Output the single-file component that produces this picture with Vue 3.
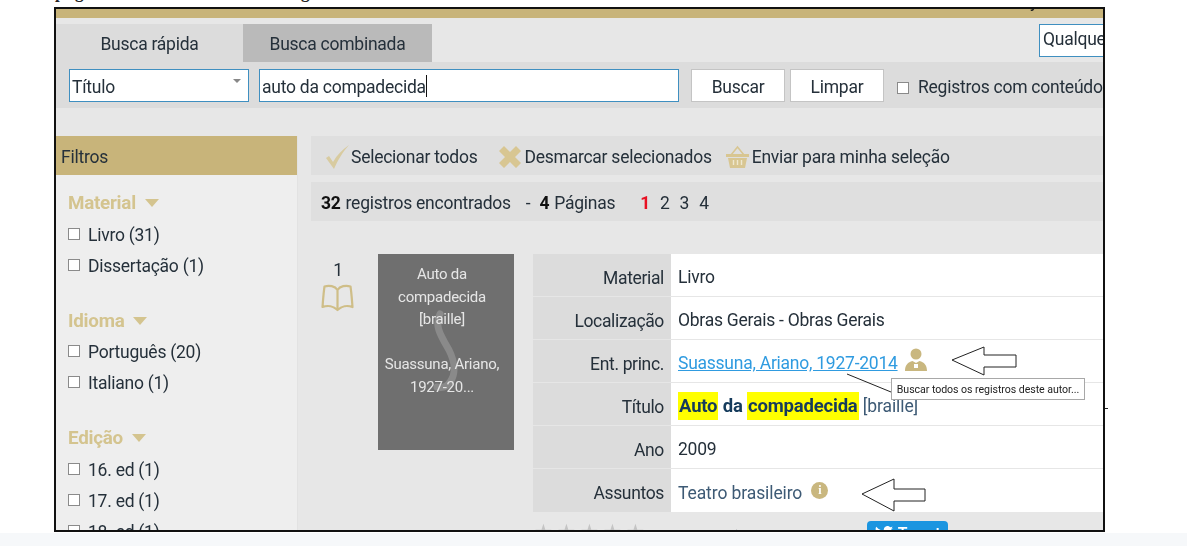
<script setup>
const groups = [
  { title: 'Material', items: ['Livro (31)', 'Dissertação (1)'] },
  { title: 'Idioma', items: ['Português (20)', 'Italiano (1)'] },
  { title: 'Edição', items: ['16. ed (1)', '17. ed (1)', '18. ed (1)'] }
]
const rows = [
  { label: 'Material', value: 'Livro' },
  { label: 'Localização', value: 'Obras Gerais - Obras Gerais' },
  { label: 'Ent. princ.', kind: 'author' },
  { label: 'Título', kind: 'title' },
  { label: 'Ano', value: '2009' },
  { label: 'Assuntos', kind: 'subject' }
]
</script>

<template>
  <div class="stage">
    <div class="clipped-line"><span>página</span><span class="second">registro</span></div>
    <div class="shot">
      <div class="goldbar"><span class="gold-y">y</span></div>
      <div class="tabs">
        <div class="tab active">Busca rápida</div>
        <div class="tab">Busca combinada</div>
        <div class="spacer"></div>
        <div class="any">Qualquer</div>
      </div>
      <div class="searchbar">
        <div class="field select"><span class="nudge">Título</span><span class="sel-caret"></span></div>
        <div class="field query"><span class="nudge">auto da compadecida</span><span class="cursor"></span></div>
        <div class="btn first"><span class="nudge">Buscar</span></div>
        <div class="btn"><span class="nudge">Limpar</span></div>
        <span class="box top"></span>
        <span class="nowrap nudge">Registros com conteúdo digital</span>
      </div>
      <div class="body">
        <aside class="filters">
          <div class="filters-head"><span class="nudge">Filtros</span></div>
          <div class="groups">
            <div v-for="g in groups" :key="g.title" class="group">
              <div class="group-title">{{ g.title }}<span class="caret"></span></div>
              <div v-for="i in g.items" :key="i" class="check"><span class="box"></span><span class="nudge-s">{{ i }}</span></div>
            </div>
          </div>
        </aside>
        <main class="results">
          <div class="strip actions">
            <span class="act a-check">
              <svg width="24" height="26" viewBox="0 0 24 26"><path d="M1 14l3-2 4 6C12 11 17 6 24 1 17 9 13 16 9 25z" fill="#d8cba0"/></svg>
              Selecionar todos
            </span>
            <span class="act a-x">
              <svg width="24" height="24" viewBox="0 0 24 24"><path d="M1 6l5-5 6 6 6-6 5 5-6 6 6 6-5 5-6-6-6 6-5-5 6-6z" fill="#d8c692"/></svg>
              Desmarcar selecionados
            </span>
            <span class="act a-basket">
              <svg width="23" height="26" viewBox="0 0 23 26"><path d="M5 11l6.500-8 6.500 8" fill="none" stroke="#d8c692" stroke-width="1.600"/><path d="M0 10h23v3H0zM2 14h19l-2 10H4z" fill="#d8c692"/><path d="M7.500 16v5M11.500 16v5M15.500 16v5" stroke="#efe8cf" stroke-width="1.400"/></svg>
              Enviar para minha seleção
            </span>
          </div>
          <div class="strip count">
            <b>32</b><span class="c1">registros encontrados</span><span class="c2">-</span><b class="c3">4</b><span class="c4">Páginas</span>
            <span class="pages"><b class="current">1</b><span>2</span><span>3</span><span>4</span></span>
          </div>
          <div class="record">
            <div class="index">
              <div class="num">1</div>
              <svg class="book" width="33" height="28" viewBox="0 0 33 28"><path d="M16.500 6C14 2 8 1 3.500 2.500 2.500 9 2 17 1.500 23c5-2 11-1 15 3 4-4 10-5 15-3-.5-6-1-14-2-20.500C25 1 19 2 16.500 6zM16.500 6v19" fill="none" stroke="#cfbe88" stroke-width="2.200" stroke-linejoin="round"/></svg>
            </div>
            <div class="cover">
              <svg class="cover-mark" width="30" height="90" viewBox="0 0 30 90"><path d="M9 4C3 16 10 26 18 40c6 12 7 24 1 32-3 5-8 6-13 5" fill="none" stroke="#8a8a8a" stroke-width="7" stroke-linecap="round"/></svg>
              <div class="cover-text">
                <p>Auto da<br>compadecida<br>[braille]</p>
                <p>Suassuna, Ariano,<br>1927-20...</p>
              </div>
            </div>
            <div class="table">
              <div v-for="r in rows" :key="r.label" class="row">
                <div class="label">{{ r.label }}</div>
                <div class="value">
                  <template v-if="r.kind === 'author'">
                    <a class="link">Suassuna, Ariano, 1927-2014</a>
                    <svg class="person" width="22" height="23" viewBox="0 0 22 23"><circle cx="11" cy="6" r="5.500" fill="#c9b77f"/><path d="M0 23c0-6 3-9 7.500-10l3.500 2 3.500-2C19 14 22 17 22 23z" fill="#c9b77f"/><path d="M9 16h4v4H9z" fill="#fff"/></svg>
                  </template>
                  <template v-else-if="r.kind === 'title'">
                    <strong><mark>Auto</mark> da <mark>compadecida</mark></strong><span class="soft">&nbsp;[braille]</span>
                  </template>
                  <template v-else-if="r.kind === 'subject'">
                    <span class="soft">Teatro brasileiro</span>
                    <span class="info">i</span>
                  </template>
                  <template v-else>{{ r.value }}</template>
                </div>
              </div>
            </div>
          </div>
          <div class="social">
            <span class="stars">★★★★★</span>
            <span class="rate">Avaliação dos usuários</span>
            <span class="tweet">
              <svg width="18" height="15" viewBox="0 0 24 20"><path d="M24 2.400c-.9.400-1.800.700-2.800.800 1-.6 1.800-1.600 2.200-2.700-1 .6-2 1-3.100 1.200A4.900 4.900 0 0 0 11.900 6.200 14 14 0 0 1 1.700 1a4.900 4.900 0 0 0 1.500 6.600c-.8 0-1.600-.2-2.200-.6 0 2.400 1.700 4.400 3.900 4.900-.7.200-1.500.2-2.200.1.600 2 2.400 3.400 4.600 3.400A9.900 9.900 0 0 1 0 17.400 14 14 0 0 0 21.500 5c1-.7 1.800-1.600 2.500-2.600z" fill="#fff"/></svg>
              Tweet
            </span>
          </div>
        </main>
      </div>
      <svg class="arrow a1" width="68" height="30" viewBox="0 0 68 30"><path d="M1 14L33 1v8h32v12H33v8z" fill="#fff" stroke="#222" stroke-width="1"/></svg>
      <svg class="arrow a2" width="68" height="34" viewBox="0 0 68 34"><path d="M1 16L33 1v10h31v12H33v10z" fill="#fff" stroke="#222" stroke-width="1"/></svg>
      <svg class="arrow leader" width="50" height="20" viewBox="0 0 50 20"><path d="M0 1L44 19" stroke="#222" stroke-width="1"/></svg>
      <div class="tooltip">Buscar todos os registros deste autor...</div>
    </div>
    <span class="tick"></span>
    <div class="footer"></div>
  </div>
</template>

<style>
html, body { margin: 0; background: #fff; overflow: hidden; }
</style>

<style scoped>
.stage {
  width: 1187px; height: 546px; position: relative; overflow: hidden;
  font-family: Roboto, "Open Sans", sans-serif; font-size: 17.5px; color: #25303a;
  letter-spacing: -0.25px; background: #fff;
}
.clipped-line { position: absolute; left: 55px; top: -17px; font: 700 17px "Liberation Serif", serif; letter-spacing: 1px; color: #222; white-space: nowrap; }
.second { margin-left: 174px; }
.nudge { position: relative; top: 1.5px; }
.nudge-s { position: relative; top: 1px; }
.shot {
  position: absolute; left: 54px; top: 7px; width: 1051px; height: 525px; box-sizing: border-box;
  border: 2px solid #111; background: #e7e7e7; overflow: hidden; filter: blur(0.35px);
}
.goldbar { height: 9px; background: #c8b47a; position: relative; overflow: hidden; }
.gold-y { position: absolute; left: 974px; top: -20px; line-height: 24px; color: #222; }
.tabs { display: flex; align-items: flex-end; height: 38px; margin-top: 6px; }
.tab { width: 187px; flex: none; height: 38px; padding-top: 2px; box-sizing: border-box; display: flex; align-items: center; justify-content: center; background: #dcdcdc; color: #25303a; }
.tab + .tab { width: 189px; background: #bababa; }
.spacer { flex: 1; }
.any {
  align-self: flex-start; width: 64px; height: 33px; box-sizing: border-box; border: 1px solid #3f8fc0; border-right: 0;
  background: #fff; padding: 4px 0 0 3px; overflow: hidden; white-space: nowrap;
}
.searchbar { height: 46px; background: #dcdcdc; display: flex; align-items: center; padding-left: 13px; white-space: nowrap; overflow: hidden; }
.field { flex: none; height: 33px; box-sizing: border-box; border: 1px solid #3f8fc0; background: #fff; display: flex; align-items: center; padding-left: 2px; }
.select { width: 180px; position: relative; }
.sel-caret { position: absolute; right: 7px; top: 9px; border: 4px solid transparent; border-top: 4px solid #888; }
.query { width: 420px; margin-left: 10px; }
.cursor { width: 1px; height: 22px; background: #111; position: relative; top: 1px; }
.btn {
  flex: none; width: 94px; height: 33px; box-sizing: border-box; border: 1px solid #c4c4c4; background: #fff; display: flex; align-items: center; justify-content: center;
  margin-left: 5px;
}
.btn.first { margin-left: 12px; }
.box { width: 10px; height: 10px; border: 1px solid #8a8a8a; background: #fff; display: inline-block; flex: none; margin-right: 8px; }
.box.top { margin-left: 13px; margin-right: 9px; margin-top: 6px; }
.nowrap { white-space: nowrap; }
.body { display: flex; margin-top: 28px; }
.filters { width: 241px; flex: none; background: #eee; height: 400px; border-right: 1px solid #e2e2e2; }
.filters-head { height: 39px; background: #c8b47a; display: flex; align-items: center; padding-left: 5px; color: #25303a; }
.groups { padding: 11px 0 0 12px; }
.group { padding-bottom: 23.5px; }
.group-title { font-weight: 700; font-size: 18.8px; color: #d4c48f; height: 32px; padding-top: 2px; box-sizing: border-box; display: flex; align-items: center; }
.caret { border: 7px solid transparent; border-top: 8px solid #d4c48f; border-bottom: 0; margin-left: 9px; }
.check { height: 31px; display: flex; align-items: center; }
.results { flex: 1; padding-left: 13px; min-width: 0; }
.strip { height: 39px; padding-top: 3px; box-sizing: border-box; background: #dfdfdf; display: flex; align-items: center; white-space: nowrap; }
.actions { padding-left: 14px; margin-bottom: 7px; }
.act { display: flex; align-items: center; gap: 2px; }
.a-x { margin-left: 21px; }
.a-basket { margin-left: 14px; gap: 3px; }
.count { padding-left: 10px; }
.count b { font-weight: 700; color: #111; }
.c1 { margin-left: 5px; }
.c2 { margin-left: 15px; }
.c3 { margin-left: 9px; }
.c4 { margin-left: 5px; }
.pages { display: flex; gap: 10px; margin-left: 25px; }
.pages .current { color: #e81123; }
.record { display: flex; margin-top: 33px; }
.index { width: 54px; display: flex; flex-direction: column; align-items: center; flex: none; }
.num { line-height: 30px; position: relative; top: 1px; }
.book { position: relative; left: -1px; }
.cover {
  width: 136px; height: 196px; background: #6f6f6f; color: #e6e6e6; flex: none; margin-left: 13px; position: relative; text-align: center; font-size: 15px; line-height: 22.7px;
}
.cover-mark { position: absolute; left: 53px; top: 56px; }
.cover-text { position: relative; padding: 9px 8px 0 0; }
.cover-text p { margin: 0 0 22px; }
.table { flex: 1; margin-left: 19px; min-width: 0; }
.row { display: flex; height: 43px; border-bottom: 1px solid #e6e6e6; box-sizing: border-box; }
.row:last-child { border-bottom: 0; }
.label { width: 138px; flex: none; background: #dcdcdc; text-align: right; box-sizing: border-box; padding: 2px 7px 0 0; line-height: 44px; overflow: hidden; letter-spacing: -0.35px; }
.value { flex: 1; background: #fff; padding: 4px 0 0 7px; line-height: 38px; white-space: nowrap; display: flex; align-items: center; box-sizing: border-box; }
.link { color: #2f9be0; text-decoration: underline; }
.person { margin-left: 7px; margin-top: -8px; }
.soft { color: #3d5a75; letter-spacing: -0.1px; }
strong { color: #153b5c; font-weight: 700; font-size: 18.5px; letter-spacing: -0.2px; }
mark { background: #ffff00; color: #153b5c; padding: 3px 1px; }
.info {
  width: 17px; height: 17px; border-radius: 50%; background: #c9b77f; color: #fff; font: 700 12px "Liberation Serif", serif; display: inline-flex; align-items: center; justify-content: center; margin: -4px 0 0 9px;
}
.social { display: flex; align-items: flex-start; margin-top: 9px; height: 30px; position: relative; }
.stars { color: #c4c4c4; letter-spacing: 4px; font-size: 21px; line-height: 22px; margin: 0 0 0 223px; }
.rate { position: absolute; left: 364px; top: 7px; color: #25303a; }
.tweet {
  position: absolute; left: 556px; top: 0; background: #1b95e0; color: #fff; border-radius: 4px; width: 81px; height: 30px; padding-bottom: 5px; box-sizing: border-box;
  display: flex; align-items: center; justify-content: center; gap: 5px; font-size: 16px; font-weight: 500;
}
.arrow { position: absolute; }
.a1 { left: 895px; top: 337px; }
.a2 { left: 805px; top: 469px; }
.leader { left: 791px; top: 364px; }
.tooltip {
  position: absolute; left: 835px; top: 369px; width: 194px; height: 22px; box-sizing: border-box; background: #fff; border: 1px solid #a8a8a8;
  font-size: 10.6px; letter-spacing: -0.05px; display: flex; align-items: center; justify-content: center; white-space: nowrap; color: #222;
}
.tick { position: absolute; left: 1105px; top: 408px; width: 3px; height: 1px; background: #222; }
.footer { position: absolute; left: 0; right: 0; bottom: 0; height: 13px; background: #f6f8fa; }
</style>
